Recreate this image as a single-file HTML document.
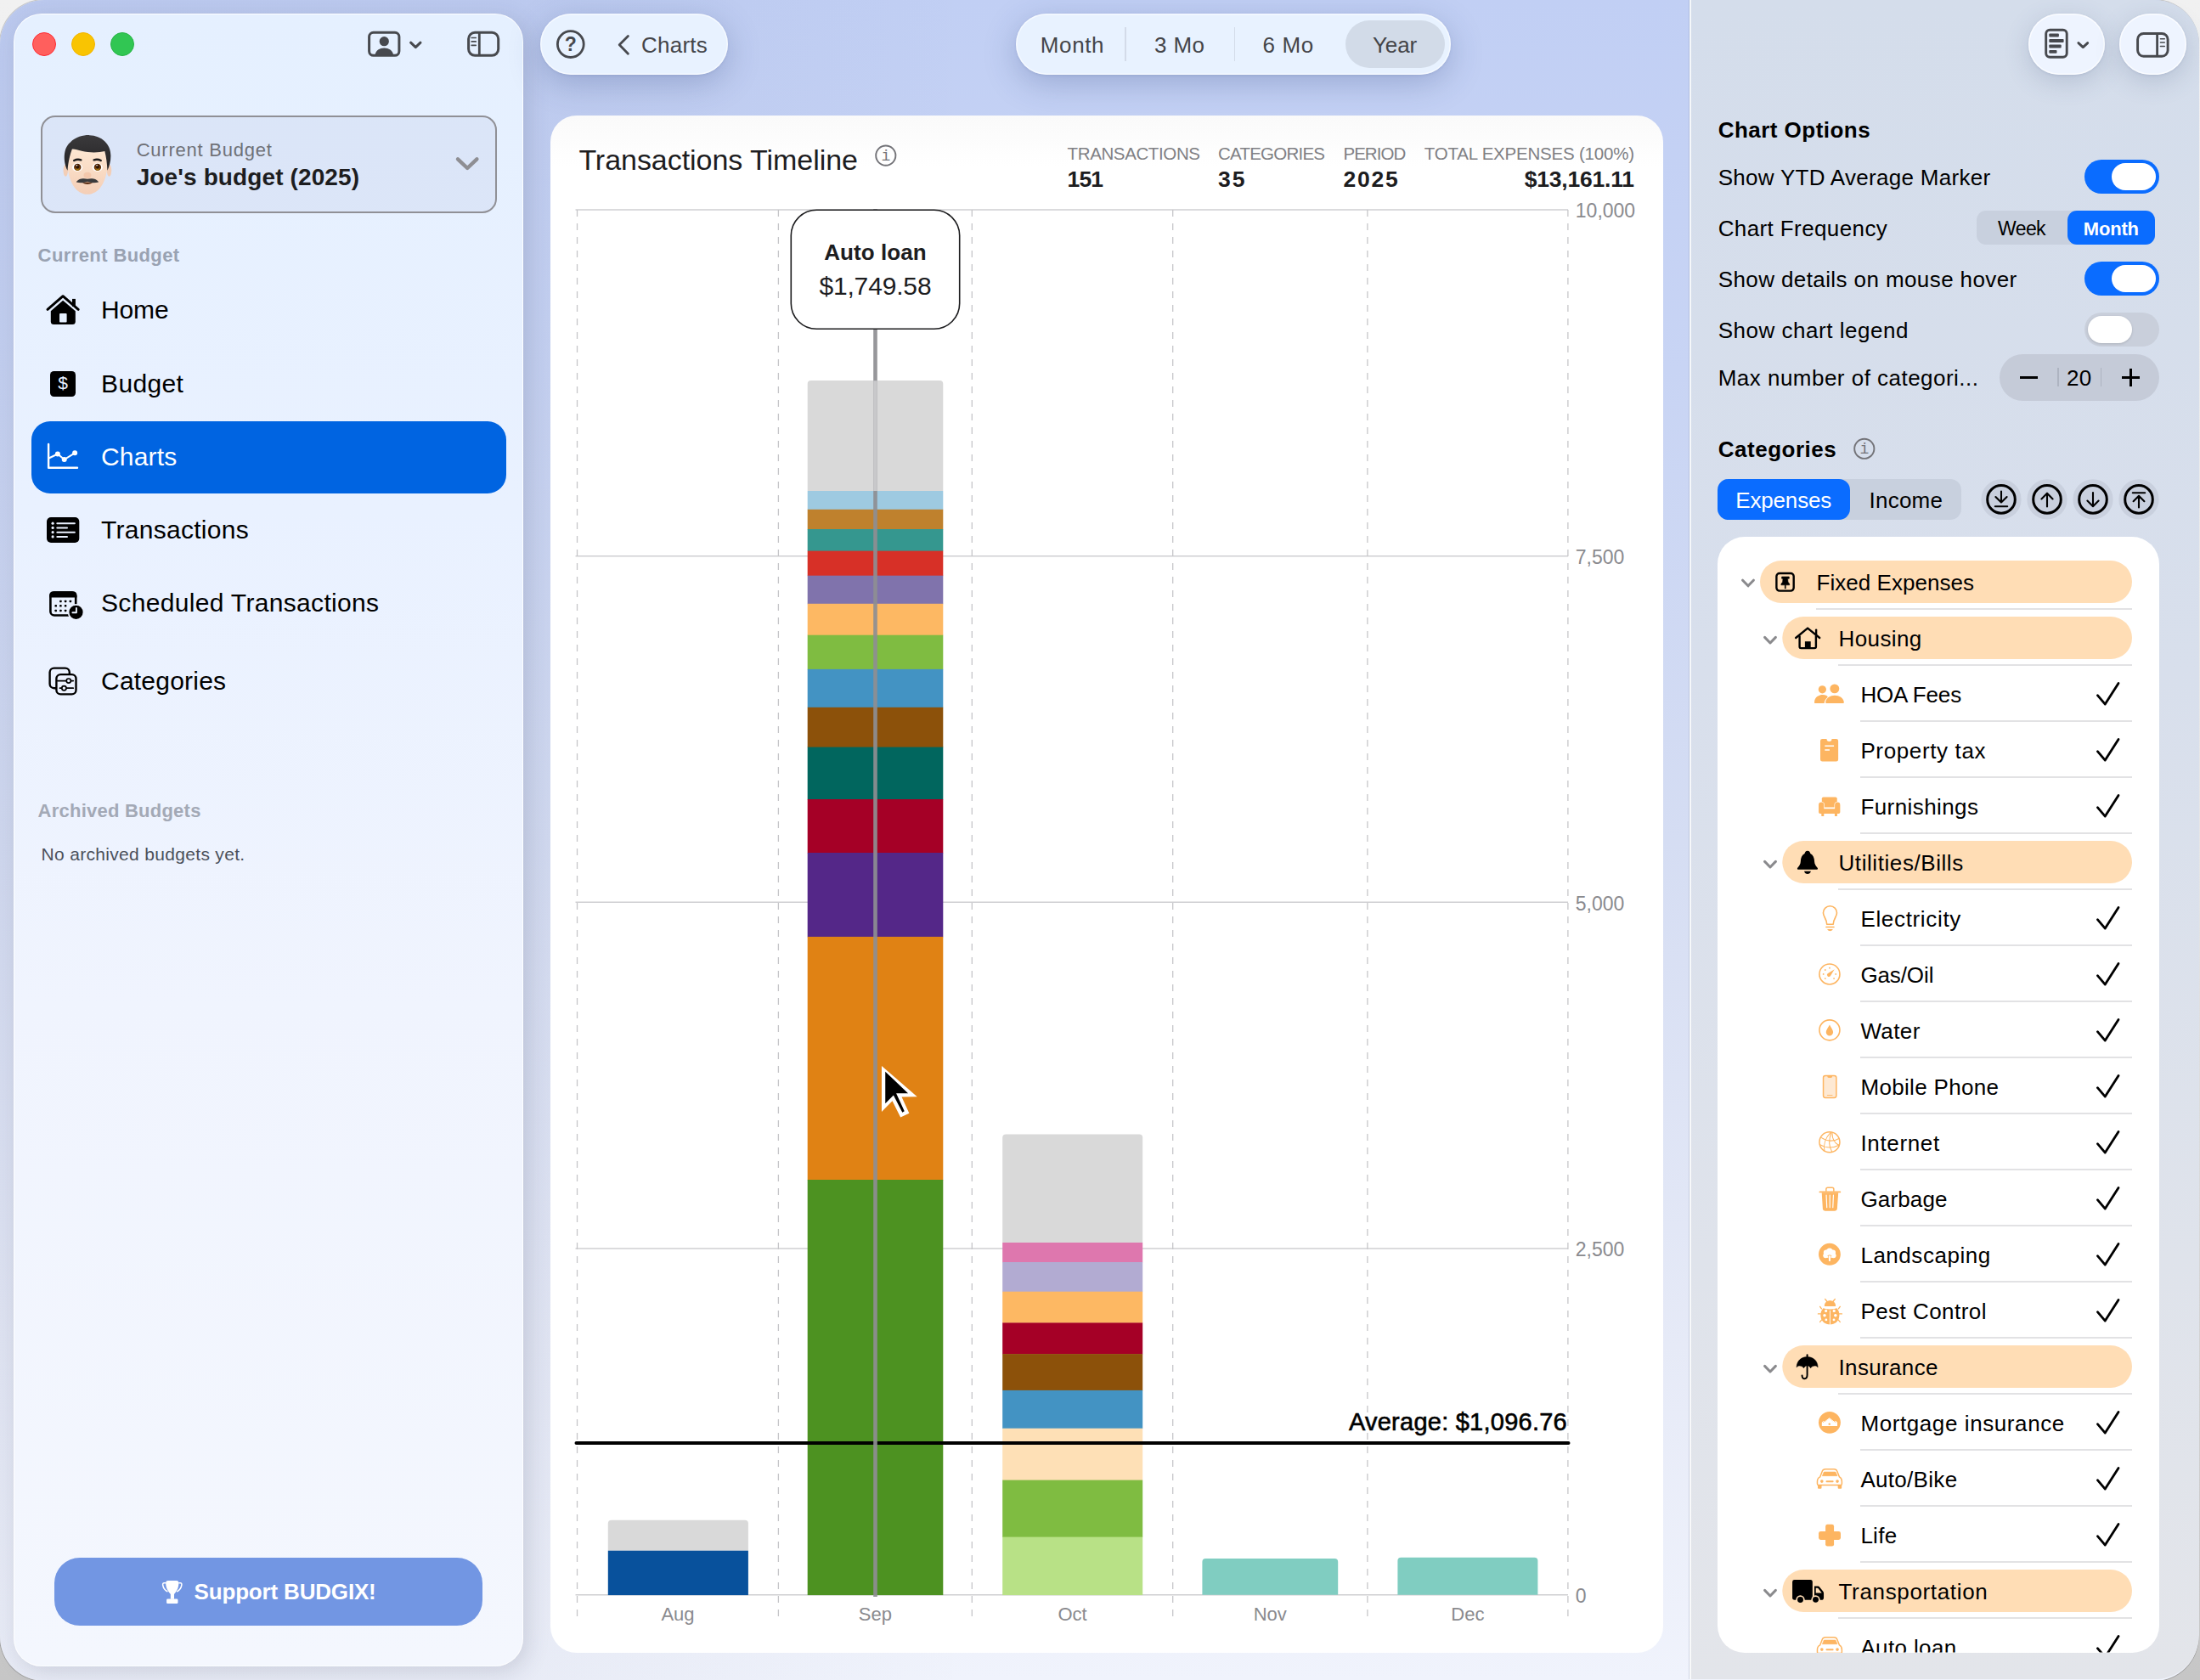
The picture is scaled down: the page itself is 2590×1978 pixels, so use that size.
<!DOCTYPE html>
<html lang="en"><head><meta charset="utf-8"><title>BUDGIX - Charts</title>
<style>
html,body{margin:0;padding:0;}
body{width:2590px;height:1978px;overflow:hidden;background:linear-gradient(180deg,#f1f1f1 0%,#e6e6e6 50%,#c6c6c6 100%);font-family:"Liberation Sans",Arial,sans-serif;position:relative;}
.b{position:absolute;box-sizing:border-box;}
.t{position:absolute;white-space:nowrap;}
svg{overflow:visible;}
</style></head><body>
<div class="b " style="left:0px;top:0px;width:2588px;height:1979px;border-radius:52px;background:linear-gradient(90deg,rgba(40,50,95,.04) 0px,rgba(40,50,95,.04) 600px,rgba(40,50,95,0) 1150px),linear-gradient(180deg,#c1cff4 0%,#c8d4f4 22%,#d5ddf3 50%,#e6eaf7 80%,#f0f3fc 100%);box-shadow:0 0 0 1px rgba(0,0,0,.18);"></div>
<div class="b " style="left:16px;top:16px;width:600px;height:1946px;border-radius:33px;background:linear-gradient(180deg,#e5f0ff 0%,#e9f1ff 30%,#f0f4fe 60%,#f4f7fe 100%);border:1.5px solid rgba(255,255,255,.85);box-shadow:5px 6px 26px rgba(60,65,95,.17);"></div>
<div class="b " style="left:38px;top:38px;width:28px;height:28px;border-radius:50%;background:#ff5f5d;border:1.5px solid #ff2b33;"></div>
<div class="b " style="left:84px;top:38px;width:28px;height:28px;border-radius:50%;background:#f9c402;border:1.5px solid #f3b400;"></div>
<div class="b " style="left:130px;top:38px;width:28px;height:28px;border-radius:50%;background:#31c653;border:1.5px solid #27b446;"></div>
<div class="b " style="left:47.5px;top:135.5px;width:537px;height:115px;border-radius:17px;background:rgba(40,60,120,.055);border:2px solid #909096;"></div>
<div class="t " style="left:160.70px;top:166.38px;font-size:22px;line-height:22px;color:#6f7177;letter-spacing:0.771px;">Current Budget</div>
<div class="t " style="left:160.70px;top:195.10px;font-size:28px;line-height:28px;color:#1d1d1f;font-weight:700;letter-spacing:0.115px;">Joe&#x27;s budget (2025)</div>
<div class="t " style="left:44.60px;top:290.38px;font-size:22px;line-height:22px;color:#99a2b2;font-weight:700;letter-spacing:0.405px;">Current Budget</div>
<div class="b " style="left:36.5px;top:495.5px;width:559.5px;height:85px;border-radius:22px;background:#0064e1;"></div>
<div class="t " style="left:119.00px;top:350.21px;font-size:30px;line-height:30px;color:#000;letter-spacing:-0.131px;">Home</div>
<div class="t " style="left:119.00px;top:436.61px;font-size:30px;line-height:30px;color:#000;letter-spacing:0.370px;">Budget</div>
<div class="t " style="left:119.00px;top:522.81px;font-size:30px;line-height:30px;color:#fff;letter-spacing:0.157px;">Charts</div>
<div class="t " style="left:119.00px;top:609.11px;font-size:30px;line-height:30px;color:#000;letter-spacing:0.282px;">Transactions</div>
<div class="t " style="left:119.00px;top:694.81px;font-size:30px;line-height:30px;color:#000;letter-spacing:0.328px;">Scheduled Transactions</div>
<div class="t " style="left:119.00px;top:787.11px;font-size:30px;line-height:30px;color:#000;letter-spacing:0.223px;">Categories</div>
<div class="t " style="left:44.60px;top:944.38px;font-size:22px;line-height:22px;color:#a3a9b6;font-weight:700;letter-spacing:0.234px;">Archived Budgets</div>
<div class="t " style="left:48.50px;top:995.22px;font-size:21px;line-height:21px;color:#4b505b;letter-spacing:0.320px;">No archived budgets yet.</div>
<div class="b " style="left:64px;top:1834px;width:504px;height:79.5px;border-radius:30px;background:#7296e3;"></div>
<div class="t " style="left:228.60px;top:1861.39px;font-size:26px;line-height:26px;color:#fff;font-weight:700;letter-spacing:-0.177px;">Support BUDGIX!</div>
<div class="b " style="left:636px;top:16px;width:221px;height:72px;border-radius:36px;background:#e8f2ff;box-shadow:0 0 0 1.5px rgba(255,255,255,.55) inset,0 10px 38px rgba(40,60,120,.26),0 1px 3px rgba(40,60,120,.10);"></div>
<div class="t " style="left:755.00px;top:39.99px;font-size:26px;line-height:26px;color:#444549;letter-spacing:0.236px;">Charts</div>
<div class="b " style="left:1195.5px;top:16px;width:512px;height:72px;border-radius:36px;background:#e8f2ff;box-shadow:0 0 0 1.5px rgba(255,255,255,.55) inset,0 10px 38px rgba(40,60,120,.26),0 1px 3px rgba(40,60,120,.10);"></div>
<div class="b " style="left:1583.5px;top:24px;width:117px;height:56px;border-radius:28px;background:#d2dbe8;"></div>
<div class="b " style="left:1324px;top:32px;width:1.5px;height:40px;background:#d3dbe9;"></div>
<div class="b " style="left:1452.5px;top:32px;width:1.5px;height:40px;background:#d3dbe9;"></div>
<div class="t " style="left:1224.80px;top:39.99px;font-size:26px;line-height:26px;color:#444549;letter-spacing:0.627px;">Month</div>
<div class="t " style="left:1359.00px;top:39.99px;font-size:26px;line-height:26px;color:#444549;letter-spacing:0.349px;">3 Mo</div>
<div class="t " style="left:1486.60px;top:39.99px;font-size:26px;line-height:26px;color:#444549;letter-spacing:0.599px;">6 Mo</div>
<div class="t " style="left:1616.00px;top:39.99px;font-size:26px;line-height:26px;color:#444549;letter-spacing:-0.135px;">Year</div>
<div class="b " style="left:648px;top:136px;width:1309.5px;height:1809.5px;border-radius:31px;background:linear-gradient(180deg,#fafafa 0,#fff 60px);"></div>
<div class="t " style="left:681.40px;top:171.22px;font-size:34px;line-height:34px;color:#1d1d1f;letter-spacing:-0.040px;">Transactions Timeline</div>
<div class="t " style="left:1256.60px;top:171.25px;font-size:20.5px;line-height:20.5px;color:#808084;letter-spacing:-0.383px;">TRANSACTIONS</div>
<div class="t " style="left:1434.00px;top:171.25px;font-size:20.5px;line-height:20.5px;color:#808084;letter-spacing:-0.769px;">CATEGORIES</div>
<div class="t " style="left:1581.40px;top:171.25px;font-size:20.5px;line-height:20.5px;color:#808084;letter-spacing:-0.932px;">PERIOD</div>
<div class="t " style="left:1676.79px;top:171.25px;font-size:20.5px;line-height:20.5px;color:#808084;letter-spacing:-0.210px;">TOTAL EXPENSES (100%)</div>
<div class="t " style="left:1256.60px;top:197.77px;font-size:26.5px;line-height:26.5px;color:#1d1d1f;font-weight:700;letter-spacing:-0.905px;">151</div>
<div class="t " style="left:1434.00px;top:197.77px;font-size:26.5px;line-height:26.5px;color:#1d1d1f;font-weight:700;letter-spacing:1.962px;">35</div>
<div class="t " style="left:1581.40px;top:197.77px;font-size:26.5px;line-height:26.5px;color:#1d1d1f;font-weight:700;letter-spacing:1.837px;">2025</div>
<div class="t " style="left:1794.78px;top:197.77px;font-size:26.5px;line-height:26.5px;color:#1d1d1f;font-weight:700;letter-spacing:-0.217px;">$13,161.11</div>
<svg class="b" style="left:0px;top:0px;" width="2590" height="1978" viewBox="0 0 2590 1978"><line x1="677.5" x2="1846.0" y1="1877.7" y2="1877.7" stroke="#cfcfd2" stroke-width="1.6"/><line x1="677.5" x2="1846.0" y1="1470.0" y2="1470.0" stroke="#cfcfd2" stroke-width="1.6"/><line x1="677.5" x2="1846.0" y1="1062.3" y2="1062.3" stroke="#cfcfd2" stroke-width="1.6"/><line x1="677.5" x2="1846.0" y1="654.7" y2="654.7" stroke="#cfcfd2" stroke-width="1.6"/><line x1="677.5" x2="1846.0" y1="247.0" y2="247.0" stroke="#cfcfd2" stroke-width="1.6"/><line x1="679.5" x2="679.5" y1="247.0" y2="1909" stroke="#c6c6c9" stroke-width="1.3" stroke-dasharray="8 8"/><line x1="916.4" x2="916.4" y1="247.0" y2="1909" stroke="#c6c6c9" stroke-width="1.3" stroke-dasharray="8 8"/><line x1="1144.3" x2="1144.3" y1="247.0" y2="1909" stroke="#c6c6c9" stroke-width="1.3" stroke-dasharray="8 8"/><line x1="1380.7" x2="1380.7" y1="247.0" y2="1909" stroke="#c6c6c9" stroke-width="1.3" stroke-dasharray="8 8"/><line x1="1609.9" x2="1609.9" y1="247.0" y2="1909" stroke="#c6c6c9" stroke-width="1.3" stroke-dasharray="8 8"/><line x1="1845.9" x2="1845.9" y1="247.0" y2="1909" stroke="#c6c6c9" stroke-width="1.3" stroke-dasharray="8 8"/><path d="M715.8 1825.7V1793.8q0 -4 4 -4H876.9q4 0 4 4V1825.7z" fill="#d9d9d9"/><rect x="715.8" y="1825.7" width="165.1" height="52.4" fill="#08519c"/><path d="M950.7 578.0V452.0q0 -4 4 -4H1106.3q4 0 4 4V578.0z" fill="#d9d9d9"/><rect x="950.7" y="578.0" width="159.6" height="22.2" fill="#9ecae1"/><rect x="950.7" y="599.8" width="159.6" height="23.6" fill="#bf812d"/><rect x="950.7" y="623.0" width="159.6" height="26.0" fill="#35978f"/><rect x="950.7" y="648.6" width="159.6" height="29.5" fill="#d73027"/><rect x="950.7" y="677.7" width="159.6" height="33.5" fill="#8073ac"/><rect x="950.7" y="710.8" width="159.6" height="37.3" fill="#fdb863"/><rect x="950.7" y="747.7" width="159.6" height="40.6" fill="#7fbc41"/><rect x="950.7" y="787.9" width="159.6" height="45.3" fill="#4393c3"/><rect x="950.7" y="832.8" width="159.6" height="47.2" fill="#8c510a"/><rect x="950.7" y="879.6" width="159.6" height="61.8" fill="#01665e"/><rect x="950.7" y="941.0" width="159.6" height="63.4" fill="#a50026"/><rect x="950.7" y="1004.0" width="159.6" height="99.3" fill="#542788"/><rect x="950.7" y="1102.9" width="159.6" height="286.5" fill="#e08214"/><rect x="950.7" y="1389.0" width="159.6" height="489.1" fill="#4d9221"/><path d="M1180.2 1463.0V1339.5q0 -4 4 -4H1341.2q4 0 4 4V1463.0z" fill="#d9d9d9"/><rect x="1180.2" y="1463.0" width="165.0" height="23.4" fill="#de77ae"/><rect x="1180.2" y="1486.0" width="165.0" height="35.1" fill="#b2abd2"/><rect x="1180.2" y="1520.7" width="165.0" height="37.1" fill="#fdb863"/><rect x="1180.2" y="1557.4" width="165.0" height="37.1" fill="#a50026"/><rect x="1180.2" y="1594.1" width="165.0" height="43.2" fill="#8c510a"/><rect x="1180.2" y="1636.9" width="165.0" height="45.2" fill="#4393c3"/><rect x="1180.2" y="1681.7" width="165.0" height="61.3" fill="#fee0b6"/><rect x="1180.2" y="1742.6" width="165.0" height="67.4" fill="#7fbc41"/><rect x="1180.2" y="1809.6" width="165.0" height="68.5" fill="#b8e186"/><path d="M1415.4 1877.7V1839q0 -4 4 -4H1571.2q4 0 4 4V1877.7z" fill="#80cdc1"/><path d="M1645.4 1877.7V1837.8q0 -4 4 -4H1806.4q4 0 4 4V1877.7z" fill="#80cdc1"/><line x1="678.5" x2="1846.5" y1="1699" y2="1699" stroke="#000" stroke-width="4" stroke-linecap="round"/><rect x="1028.2" y="246" width="4.6" height="1634" fill="#8e8e93" opacity=".92"/><rect x="1028.2" y="448.2" width="4.6" height="129.8" fill="#c8c8ca"/><rect x="931.3" y="247.3" width="198.4" height="140" rx="30" fill="#fff" stroke="#1c1c1e" stroke-width="1.6"/></svg>
<div class="t " style="left:970.24px;top:283.59px;font-size:26px;line-height:26px;color:#1d1d1f;font-weight:700;letter-spacing:0.081px;">Auto loan</div>
<div class="t " style="left:964.42px;top:321.91px;font-size:30px;line-height:30px;color:#1d1d1f;letter-spacing:-0.162px;">$1,749.58</div>
<div class="t " style="left:1587.94px;top:1659.95px;font-size:29px;line-height:29px;color:#000;letter-spacing:0.243px;-webkit-text-stroke:.6px #000;">Average: $1,096.76</div>
<div class="t " style="left:778.43px;top:1889.78px;font-size:22px;line-height:22px;color:#8a8a8e;">Aug</div>
<div class="t " style="left:1010.73px;top:1889.78px;font-size:22px;line-height:22px;color:#8a8a8e;">Sep</div>
<div class="t " style="left:1245.39px;top:1889.78px;font-size:22px;line-height:22px;color:#8a8a8e;">Oct</div>
<div class="t " style="left:1475.74px;top:1889.78px;font-size:22px;line-height:22px;color:#8a8a8e;">Nov</div>
<div class="t " style="left:1708.34px;top:1889.78px;font-size:22px;line-height:22px;color:#8a8a8e;">Dec</div>
<div class="t " style="left:1854.80px;top:237.33px;font-size:23px;line-height:23px;color:#8a8a8e;">10,000</div>
<div class="t " style="left:1854.80px;top:645.01px;font-size:23px;line-height:23px;color:#8a8a8e;">7,500</div>
<div class="t " style="left:1854.80px;top:1052.68px;font-size:23px;line-height:23px;color:#8a8a8e;">5,000</div>
<div class="t " style="left:1854.80px;top:1460.36px;font-size:23px;line-height:23px;color:#8a8a8e;">2,500</div>
<div class="t " style="left:1854.80px;top:1868.03px;font-size:23px;line-height:23px;color:#8a8a8e;">0</div>
<div class="b " style="left:1988.5px;top:0px;width:600.5px;height:1977px;border-radius:0 52px 52px 0;background:linear-gradient(180deg,#d4ddeb 0%,#d8dfec 40%,#dfe3eb 75%,#e3e5ea 100%);border-left:2px solid rgba(255,255,255,.75);box-shadow:-1px 0 0 rgba(120,130,160,.25);"></div>
<div class="b " style="left:2388px;top:16px;width:90px;height:72px;border-radius:36px;background:#eef4ff;box-shadow:0 0 0 1.5px rgba(255,255,255,.7) inset,0 8px 30px rgba(60,80,120,.20),0 1px 3px rgba(40,60,120,.10);"></div>
<div class="b " style="left:2495px;top:16px;width:79px;height:72px;border-radius:36px;background:#eef4ff;box-shadow:0 0 0 1.5px rgba(255,255,255,.7) inset,0 8px 30px rgba(60,80,120,.20),0 1px 3px rgba(40,60,120,.10);"></div>
<div class="t " style="left:2022.70px;top:140.19px;font-size:26px;line-height:26px;color:#000;font-weight:700;letter-spacing:0.466px;">Chart Options</div>
<div class="t " style="left:2022.70px;top:195.79px;font-size:26px;line-height:26px;color:#000;letter-spacing:0.287px;">Show YTD Average Marker</div>
<div class="t " style="left:2022.70px;top:255.79px;font-size:26px;line-height:26px;color:#000;letter-spacing:0.390px;">Chart Frequency</div>
<div class="t " style="left:2022.70px;top:315.79px;font-size:26px;line-height:26px;color:#000;letter-spacing:0.404px;">Show details on mouse hover</div>
<div class="t " style="left:2022.70px;top:375.79px;font-size:26px;line-height:26px;color:#000;letter-spacing:0.519px;">Show chart legend</div>
<div class="t " style="left:2022.70px;top:431.99px;font-size:26px;line-height:26px;color:#000;letter-spacing:0.480px;">Max number of categori...</div>
<div class="b " style="left:2454px;top:188px;width:88px;height:40px;border-radius:20px;background:#0a6cff;"></div>
<div class="b " style="left:2486px;top:192px;width:52px;height:32px;border-radius:16px;background:#fff;"></div>
<div class="b " style="left:2454px;top:308px;width:88px;height:40px;border-radius:20px;background:#0a6cff;"></div>
<div class="b " style="left:2486px;top:312px;width:52px;height:32px;border-radius:16px;background:#fff;"></div>
<div class="b " style="left:2454px;top:368px;width:88px;height:40px;border-radius:20px;background:#c9cfdb;"></div>
<div class="b " style="left:2457.5px;top:372px;width:52px;height:32px;border-radius:16px;background:#fff;box-shadow:0 1px 3px rgba(0,0,0,.15);"></div>
<div class="b " style="left:2327px;top:248px;width:210px;height:40px;border-radius:11px;background:#c8d0de;"></div>
<div class="b " style="left:2434px;top:248px;width:103px;height:40px;border-radius:11px;background:#0a6cff;"></div>
<div class="t " style="left:2352.00px;top:257.73px;font-size:23px;line-height:23px;color:#000;letter-spacing:-0.595px;">Week</div>
<div class="t " style="left:2452.80px;top:258.58px;font-size:22px;line-height:22px;color:#fff;font-weight:700;letter-spacing:-0.194px;">Month</div>
<div class="b " style="left:2354px;top:416.5px;width:188px;height:55px;border-radius:27.5px;background:#c5cbd8;"></div>
<div class="b " style="left:2422px;top:433px;width:1.6px;height:22px;background:#aeb4c1;"></div>
<div class="b " style="left:2472.5px;top:433px;width:1.6px;height:22px;background:#aeb4c1;"></div>
<div class="t " style="left:2433.00px;top:431.99px;font-size:26px;line-height:26px;color:#000;letter-spacing:0.189px;">20</div>
<div class="b " style="left:2378px;top:443px;width:21px;height:2.6px;background:#000;"></div>
<div class="b " style="left:2498px;top:443px;width:21px;height:2.6px;background:#000;"></div>
<div class="b " style="left:2507.2px;top:433.8px;width:2.6px;height:21px;background:#000;"></div>
<div class="t " style="left:2022.70px;top:515.99px;font-size:26px;line-height:26px;color:#000;font-weight:700;letter-spacing:0.521px;">Categories</div>
<div class="b " style="left:2022px;top:564px;width:286.5px;height:48px;border-radius:13px;background:#c8d0de;"></div>
<div class="b " style="left:2022px;top:564px;width:156px;height:48px;border-radius:13px;background:#0a6cff;"></div>
<div class="t " style="left:2043.20px;top:575.79px;font-size:26px;line-height:26px;color:#fff;letter-spacing:-0.148px;">Expenses</div>
<div class="t " style="left:2200.50px;top:575.79px;font-size:26px;line-height:26px;color:#000;letter-spacing:0.239px;">Income</div>
<div class="b " style="left:2022px;top:632px;width:520.2px;height:1313.5px;border-radius:32px;background:#fff;overflow:hidden;"></div>
<svg class="b" style="left:0px;top:0px;" width="2590" height="1978" viewBox="0 0 2590 1978"><defs><clipPath id="lc"><rect x="2022" y="632" width="520.5" height="1313.5" rx="32"/></clipPath></defs><g clip-path="url(#lc)"><rect x="2072" y="660" width="438" height="50" rx="25" fill="#ffddb5"/><rect x="2138" y="716" width="372" height="2" fill="#e2e2e4"/><rect x="2098.3" y="726" width="411.7" height="50" rx="25" fill="#ffddb5"/><rect x="2164" y="782" width="346" height="2" fill="#e2e2e4"/><rect x="2190" y="848" width="320" height="2" fill="#e2e2e4"/><path d="M2469.4 818.7L2478.3 829.1L2494 804.5" fill="none" stroke="#000" stroke-width="2.8" stroke-linecap="round" stroke-linejoin="round"/><rect x="2190" y="914" width="320" height="2" fill="#e2e2e4"/><path d="M2469.4 884.7L2478.3 895.1L2494 870.5" fill="none" stroke="#000" stroke-width="2.8" stroke-linecap="round" stroke-linejoin="round"/><rect x="2190" y="980" width="320" height="2" fill="#e2e2e4"/><path d="M2469.4 950.7L2478.3 961.1L2494 936.5" fill="none" stroke="#000" stroke-width="2.8" stroke-linecap="round" stroke-linejoin="round"/><rect x="2098.3" y="990" width="411.7" height="50" rx="25" fill="#ffddb5"/><rect x="2164" y="1046" width="346" height="2" fill="#e2e2e4"/><rect x="2190" y="1112" width="320" height="2" fill="#e2e2e4"/><path d="M2469.4 1082.7L2478.3 1093.1L2494 1068.5" fill="none" stroke="#000" stroke-width="2.8" stroke-linecap="round" stroke-linejoin="round"/><rect x="2190" y="1178" width="320" height="2" fill="#e2e2e4"/><path d="M2469.4 1148.7L2478.3 1159.1L2494 1134.5" fill="none" stroke="#000" stroke-width="2.8" stroke-linecap="round" stroke-linejoin="round"/><rect x="2190" y="1244" width="320" height="2" fill="#e2e2e4"/><path d="M2469.4 1214.7L2478.3 1225.1L2494 1200.5" fill="none" stroke="#000" stroke-width="2.8" stroke-linecap="round" stroke-linejoin="round"/><rect x="2190" y="1310" width="320" height="2" fill="#e2e2e4"/><path d="M2469.4 1280.7L2478.3 1291.1L2494 1266.5" fill="none" stroke="#000" stroke-width="2.8" stroke-linecap="round" stroke-linejoin="round"/><rect x="2190" y="1376" width="320" height="2" fill="#e2e2e4"/><path d="M2469.4 1346.7L2478.3 1357.1L2494 1332.5" fill="none" stroke="#000" stroke-width="2.8" stroke-linecap="round" stroke-linejoin="round"/><rect x="2190" y="1442" width="320" height="2" fill="#e2e2e4"/><path d="M2469.4 1412.7L2478.3 1423.1L2494 1398.5" fill="none" stroke="#000" stroke-width="2.8" stroke-linecap="round" stroke-linejoin="round"/><rect x="2190" y="1508" width="320" height="2" fill="#e2e2e4"/><path d="M2469.4 1478.7L2478.3 1489.1L2494 1464.5" fill="none" stroke="#000" stroke-width="2.8" stroke-linecap="round" stroke-linejoin="round"/><rect x="2190" y="1574" width="320" height="2" fill="#e2e2e4"/><path d="M2469.4 1544.7L2478.3 1555.1L2494 1530.5" fill="none" stroke="#000" stroke-width="2.8" stroke-linecap="round" stroke-linejoin="round"/><rect x="2098.3" y="1584" width="411.7" height="50" rx="25" fill="#ffddb5"/><rect x="2164" y="1640" width="346" height="2" fill="#e2e2e4"/><rect x="2190" y="1706" width="320" height="2" fill="#e2e2e4"/><path d="M2469.4 1676.7L2478.3 1687.1L2494 1662.5" fill="none" stroke="#000" stroke-width="2.8" stroke-linecap="round" stroke-linejoin="round"/><rect x="2190" y="1772" width="320" height="2" fill="#e2e2e4"/><path d="M2469.4 1742.7L2478.3 1753.1L2494 1728.5" fill="none" stroke="#000" stroke-width="2.8" stroke-linecap="round" stroke-linejoin="round"/><rect x="2190" y="1838" width="320" height="2" fill="#e2e2e4"/><path d="M2469.4 1808.7L2478.3 1819.1L2494 1794.5" fill="none" stroke="#000" stroke-width="2.8" stroke-linecap="round" stroke-linejoin="round"/><rect x="2098.3" y="1848" width="411.7" height="50" rx="25" fill="#ffddb5"/><rect x="2164" y="1904" width="346" height="2" fill="#e2e2e4"/><rect x="2190" y="1970" width="320" height="2" fill="#e2e2e4"/><path d="M2469.4 1940.7L2478.3 1951.1L2494 1926.5" fill="none" stroke="#000" stroke-width="2.8" stroke-linecap="round" stroke-linejoin="round"/></g></svg>
<div class="t " style="left:2138.60px;top:672.69px;font-size:26px;line-height:26px;color:#000;letter-spacing:0.029px;">Fixed Expenses</div>
<div class="t " style="left:2164.50px;top:738.69px;font-size:26px;line-height:26px;color:#000;letter-spacing:0.400px;">Housing</div>
<div class="t " style="left:2190.40px;top:804.69px;font-size:26px;line-height:26px;color:#000;letter-spacing:-0.167px;">HOA Fees</div>
<div class="t " style="left:2190.40px;top:870.69px;font-size:26px;line-height:26px;color:#000;letter-spacing:0.635px;">Property tax</div>
<div class="t " style="left:2190.40px;top:936.69px;font-size:26px;line-height:26px;color:#000;letter-spacing:0.418px;">Furnishings</div>
<div class="t " style="left:2164.50px;top:1002.69px;font-size:26px;line-height:26px;color:#000;letter-spacing:0.574px;">Utilities/Bills</div>
<div class="t " style="left:2190.40px;top:1068.69px;font-size:26px;line-height:26px;color:#000;letter-spacing:0.669px;">Electricity</div>
<div class="t " style="left:2190.40px;top:1134.69px;font-size:26px;line-height:26px;color:#000;letter-spacing:-0.112px;">Gas/Oil</div>
<div class="t " style="left:2190.40px;top:1200.69px;font-size:26px;line-height:26px;color:#000;letter-spacing:0.404px;">Water</div>
<div class="t " style="left:2190.40px;top:1266.69px;font-size:26px;line-height:26px;color:#000;letter-spacing:0.333px;">Mobile Phone</div>
<div class="t " style="left:2190.40px;top:1332.69px;font-size:26px;line-height:26px;color:#000;letter-spacing:0.666px;">Internet</div>
<div class="t " style="left:2190.40px;top:1398.69px;font-size:26px;line-height:26px;color:#000;letter-spacing:0.159px;">Garbage</div>
<div class="t " style="left:2190.40px;top:1464.69px;font-size:26px;line-height:26px;color:#000;letter-spacing:0.530px;">Landscaping</div>
<div class="t " style="left:2190.40px;top:1530.69px;font-size:26px;line-height:26px;color:#000;letter-spacing:0.461px;">Pest Control</div>
<div class="t " style="left:2164.50px;top:1596.69px;font-size:26px;line-height:26px;color:#000;letter-spacing:0.346px;">Insurance</div>
<div class="t " style="left:2190.40px;top:1662.69px;font-size:26px;line-height:26px;color:#000;letter-spacing:0.594px;">Mortgage insurance</div>
<div class="t " style="left:2190.40px;top:1728.69px;font-size:26px;line-height:26px;color:#000;letter-spacing:0.301px;">Auto/Bike</div>
<div class="t " style="left:2190.40px;top:1794.69px;font-size:26px;line-height:26px;color:#000;letter-spacing:0.270px;">Life</div>
<div class="t " style="left:2164.50px;top:1860.69px;font-size:26px;line-height:26px;color:#000;letter-spacing:0.658px;">Transportation</div>
<div class="t " style="left:2190.40px;top:1926.69px;font-size:26px;line-height:26px;color:#000;letter-spacing:0.370px;clip-path:inset(0 0 7.2px 0);">Auto loan</div>
<svg class="b" style="left:0px;top:0px;" width="2590" height="1978" viewBox="0 0 2590 1978"><rect x="434.6" y="38.3" width="35.3" height="27" rx="5" fill="none" stroke="#47494e" stroke-width="3"/><circle cx="452.3" cy="48.7" r="5.6" fill="#47494e"/><path d="M441.6 64.8C442.5 53.8 462.1 53.8 463 64.8Z" fill="#47494e"/><path d="M483.6 50.2L489.3 55.6L495 50.2" fill="none" stroke="#47494e" stroke-width="3" stroke-linecap="round" stroke-linejoin="round"/><rect x="551.6" y="38.3" width="35.1" height="27" rx="7.5" fill="none" stroke="#47494e" stroke-width="3"/><line x1="564.3" x2="564.3" y1="38.3" y2="65.3" stroke="#47494e" stroke-width="2.8"/><line x1="555.2" x2="560.2" y1="44.5" y2="44.5" stroke="#47494e" stroke-width="1.7" stroke-linecap="round"/><line x1="555.2" x2="560.2" y1="48.9" y2="48.9" stroke="#47494e" stroke-width="1.7" stroke-linecap="round"/><line x1="555.2" x2="560.2" y1="53.3" y2="53.3" stroke="#47494e" stroke-width="1.7" stroke-linecap="round"/><path d="M56 364.3L74.1 348.7L92.2 364.3" fill="none" stroke="#000" stroke-width="3" stroke-linecap="round" stroke-linejoin="round"/><rect x="85" y="351.9" width="3.9" height="9" fill="#000"/><path d="M59.8 366.3L74.1 353.8L88.8 366.3V378.4Q88.8 381.9 85.3 381.9H63.3Q59.8 381.9 59.8 378.4Z" fill="#000"/><rect x="70" y="369" width="8.6" height="10.5" rx="1" fill="#e6f0ff"/><rect x="59" y="437" width="30" height="30" rx="4.5" fill="#000"/><text x="74" y="458.4" font-family="Liberation Sans,Arial,sans-serif" font-size="21" fill="#e6efff" text-anchor="middle">$</text><path d="M57.1 523V550.7H91" fill="none" stroke="#fff" stroke-width="2.4" stroke-linecap="round" stroke-linejoin="round"/><path d="M57.5 539.5L67.9 534.5L75.7 541L88.1 533.3" fill="none" stroke="#fff" stroke-width="2"/><circle cx="67.9" cy="534.5" r="3" fill="#fff"/><circle cx="75.7" cy="541" r="3" fill="#fff"/><circle cx="88.1" cy="533.3" r="3" fill="#fff"/><rect x="55" y="609" width="38.3" height="30" rx="5" fill="#000"/><circle cx="62.1" cy="616.2" r="1.6" fill="#eaf1ff"/><line x1="67.3" x2="87.9" y1="616.2" y2="616.2" stroke="#eaf1ff" stroke-width="2" stroke-linecap="round"/><circle cx="62.1" cy="621.4" r="1.6" fill="#eaf1ff"/><line x1="67.3" x2="79" y1="621.4" y2="621.4" stroke="#eaf1ff" stroke-width="2" stroke-linecap="round"/><circle cx="62.1" cy="626.7" r="1.6" fill="#eaf1ff"/><line x1="67.3" x2="87.9" y1="626.7" y2="626.7" stroke="#eaf1ff" stroke-width="2" stroke-linecap="round"/><circle cx="62.1" cy="631.9" r="1.6" fill="#eaf1ff"/><line x1="67.3" x2="79" y1="631.9" y2="631.9" stroke="#eaf1ff" stroke-width="2" stroke-linecap="round"/><rect x="59.4" y="697.5" width="29.8" height="27" rx="4.5" fill="none" stroke="#000" stroke-width="2.6"/><path d="M58.1 703.4V701.2Q58.1 696.2 63.1 696.2H85.5Q90.5 696.2 90.5 701.2V703.4Z" fill="#000"/><rect x="70.15" y="706.65" width="2.5" height="2.5" rx=".6" fill="#000"/><rect x="75.85" y="706.65" width="2.5" height="2.5" rx=".6" fill="#000"/><rect x="81.65" y="706.65" width="2.5" height="2.5" rx=".6" fill="#000"/><rect x="64.45" y="712.05" width="2.5" height="2.5" rx=".6" fill="#000"/><rect x="70.15" y="712.05" width="2.5" height="2.5" rx=".6" fill="#000"/><rect x="75.85" y="712.05" width="2.5" height="2.5" rx=".6" fill="#000"/><rect x="64.45" y="717.65" width="2.5" height="2.5" rx=".6" fill="#000"/><rect x="70.15" y="717.65" width="2.5" height="2.5" rx=".6" fill="#000"/><rect x="75.85" y="717.65" width="2.5" height="2.5" rx=".6" fill="#000"/><circle cx="89.5" cy="720.8" r="9.8" fill="#ecf2fe"/><circle cx="89.5" cy="720.8" r="8.1" fill="#000"/><path d="M89.9 715.9V721.2H85.4" fill="none" stroke="#ecf2fe" stroke-width="1.9" stroke-linecap="round" stroke-linejoin="round"/><rect x="58.6" y="786.6" width="23.2" height="23.6" rx="5" fill="none" stroke="#000" stroke-width="2.4"/><rect x="66.4" y="794.1" width="23.1" height="23.3" rx="5" fill="#edf2fe" stroke="#000" stroke-width="2.4"/><line x1="67.8" x2="86.2" y1="801.6" y2="801.6" stroke="#000" stroke-width="1.7" stroke-linecap="round"/><line x1="70.5" x2="86.2" y1="810.2" y2="810.2" stroke="#000" stroke-width="1.7" stroke-linecap="round"/><circle cx="80.8" cy="801.6" r="2.6" fill="#edf2fe" stroke="#000" stroke-width="1.7"/><circle cx="75.4" cy="810.2" r="2.6" fill="#edf2fe" stroke="#000" stroke-width="1.7"/><path d="M539 187.3L550.2 198L561.4 187.3" fill="none" stroke="#8e8e93" stroke-width="4.4" stroke-linecap="round" stroke-linejoin="round"/><circle cx="671.8" cy="52.1" r="15.4" fill="none" stroke="#47494e" stroke-width="2.8"/><text x="671.8" y="60.3" font-family="Liberation Sans,Arial,sans-serif" font-size="23" font-weight="700" fill="#47494e" text-anchor="middle">?</text><path d="M739.4 42.6L729.2 52.8L739.4 63.2" fill="none" stroke="#47494e" stroke-width="2.8" stroke-linecap="round" stroke-linejoin="round"/><rect x="2408.7" y="35.2" width="24.5" height="32.1" rx="4.5" fill="none" stroke="#47494e" stroke-width="2.9"/><rect x="2412.3" y="39.6" width="11.6" height="3.9" rx="1" fill="#47494e"/><rect x="2412.3" y="46.1" width="17.3" height="3.9" rx="1" fill="#47494e"/><rect x="2412.3" y="52.5" width="14.4" height="3.9" rx="1" fill="#47494e"/><rect x="2412.3" y="59" width="9.2" height="3.8" rx="1" fill="#47494e"/><path d="M2446.9 50.6L2452.3 55.6L2457.7 50.6" fill="none" stroke="#47494e" stroke-width="2.9" stroke-linecap="round" stroke-linejoin="round"/><rect x="2516.6" y="39.5" width="35.5" height="26.8" rx="7" fill="none" stroke="#47494e" stroke-width="2.9"/><line x1="2539.6" x2="2539.6" y1="39.5" y2="66.3" stroke="#47494e" stroke-width="2.8"/><line x1="2543.5" x2="2548.3" y1="45.7" y2="45.7" stroke="#47494e" stroke-width="1.6" stroke-linecap="round"/><line x1="2543.5" x2="2548.3" y1="50" y2="50" stroke="#47494e" stroke-width="1.6" stroke-linecap="round"/><line x1="2543.5" x2="2548.3" y1="54.5" y2="54.5" stroke="#47494e" stroke-width="1.6" stroke-linecap="round"/><circle cx="1042.8" cy="183.1" r="11.6" fill="none" stroke="#737378" stroke-width="1.9"/><text x="1042.8" y="188.7" font-family="Liberation Mono,monospace" font-size="18" fill="#737378" text-anchor="middle">i</text><circle cx="2194.8" cy="528.3" r="11.6" fill="none" stroke="#737378" stroke-width="1.9"/><text x="2194.8" y="533.9" font-family="Liberation Mono,monospace" font-size="18" fill="#737378" text-anchor="middle">i</text><circle cx="2356" cy="587.9" r="23.6" fill="#c9d0de"/><circle cx="2356" cy="587.9" r="16.3" fill="none" stroke="#000" stroke-width="3"/><path d="M2356 578.6V591.4M2349.4 585L2356 591.6L2362.6 585M2348.8 596.2H2363.2" fill="none" stroke="#000" stroke-width="2.1" stroke-linecap="round" stroke-linejoin="round"/><circle cx="2410" cy="587.9" r="23.6" fill="#c9d0de"/><circle cx="2410" cy="587.9" r="16.3" fill="none" stroke="#000" stroke-width="3"/><path d="M2410 596.4V580.8M2403.4 587.4L2410 580.7L2416.6 587.4" fill="none" stroke="#000" stroke-width="2.1" stroke-linecap="round" stroke-linejoin="round"/><circle cx="2464" cy="587.9" r="23.6" fill="#c9d0de"/><circle cx="2464" cy="587.9" r="16.3" fill="none" stroke="#000" stroke-width="3"/><path d="M2464 580V596M2457.4 589.5L2464 596.2L2470.6 589.5" fill="none" stroke="#000" stroke-width="2.1" stroke-linecap="round" stroke-linejoin="round"/><circle cx="2518" cy="587.9" r="23.6" fill="#c9d0de"/><circle cx="2518" cy="587.9" r="16.3" fill="none" stroke="#000" stroke-width="3"/><path d="M2510.8 580.2H2525.2M2518 597.4V584M2511.6 590.2L2518 583.8L2524.4 590.2" fill="none" stroke="#000" stroke-width="2.1" stroke-linecap="round" stroke-linejoin="round"/></svg>
<svg class="b" style="left:60px;top:145px;" width="90" height="95" viewBox="0 0 1592 1680"><defs><linearGradient id="sk" x1="0" y1="0" x2="0" y2="1"><stop offset="0" stop-color="#fee9d4"/><stop offset="1" stop-color="#f4ceb6"/></linearGradient><radialGradient id="ir" cx=".5" cy=".75" r=".7"><stop offset="0" stop-color="#b98a12"/><stop offset=".55" stop-color="#6a3408"/><stop offset="1" stop-color="#4a2206"/></radialGradient><linearGradient id="hr" x1="0" y1="0" x2="0" y2="1"><stop offset="0" stop-color="#3b3a3c"/><stop offset="1" stop-color="#232224"/></linearGradient></defs><ellipse cx="305" cy="985" rx="48" ry="125" fill="#f3ceb6"/><ellipse cx="1212" cy="985" rx="48" ry="125" fill="#f3ceb6"/><path d="M335 720C335 1240 530 1482 760 1482C990 1482 1187 1240 1187 720C1187 380 335 380 335 720Z" fill="url(#sk)"/><path d="M345 985C250 800 250 520 400 400C520 280 700 245 800 250C1050 255 1250 430 1245 680C1245 800 1215 900 1175 985C1170 850 1150 700 1120 585C1000 615 800 620 640 580C560 560 480 530 440 540C400 650 360 800 345 985Z" fill="url(#hr)"/><path d="M480 778Q550 742 625 766" fill="none" stroke="#1d1c1d" stroke-width="42" stroke-linecap="round"/><path d="M895 766Q970 742 1040 778" fill="none" stroke="#1d1c1d" stroke-width="42" stroke-linecap="round"/><ellipse cx="550" cy="922" rx="108" ry="86" fill="#fff"/><circle cx="553" cy="918" r="74" fill="url(#ir)"/><circle cx="553" cy="915" r="34" fill="#2a1306"/><circle cx="538" cy="880" r="14" fill="#fff"/><ellipse cx="968" cy="922" rx="108" ry="86" fill="#fff"/><circle cx="971" cy="918" r="74" fill="url(#ir)"/><circle cx="971" cy="915" r="34" fill="#2a1306"/><circle cx="956" cy="880" r="14" fill="#fff"/><ellipse cx="760" cy="1085" rx="78" ry="62" fill="#f3c3a6" opacity=".8"/><path d="M648 1238Q760 1305 872 1238Q760 1222 648 1238Z" fill="#5c2c12"/><path d="M528 1228C555 1160 680 1135 760 1165C840 1135 965 1160 992 1228C900 1250 820 1240 760 1218C700 1240 620 1250 528 1228Z" fill="#3a3a3c"/></svg>
<svg class="b" style="left:180px;top:1850px;" width="60" height="50" viewBox="0 0 2016 1680"><path d="M510 440Q520 370 600 370H940Q1010 370 1020 440C1030 700 900 830 840 910V1100H700V910C640 830 500 700 510 440Z" fill="#fff"/><rect x="540" y="1095" width="450" height="185" rx="45" fill="#fff"/><path d="M515 462H445Q382 462 392 540C412 680 480 760 585 805" fill="none" stroke="#fff" stroke-width="52"/><path d="M1015 462H1085Q1148 462 1138 540C1118 680 1050 760 945 805" fill="none" stroke="#fff" stroke-width="52"/></svg>
<svg class="b" style="left:1020px;top:1240px;" width="80" height="90" viewBox="0 0 1493 1680"><path d="M335 280L1115 955L775 960L940 1320L750 1410L570 1050L335 1290Z" fill="#fff"/><path d="M415 405L915 880L655 880L835 1275L790 1300L595 925L415 1105Z" fill="#000"/></svg>
<svg class="b" style="left:0px;top:0px;" width="2590" height="1978" viewBox="0 0 2590 1978"><path d="M2051.6 683.2L2058 689.8L2064.4 683.2" fill="none" stroke="#8a8a8d" stroke-width="3" stroke-linecap="round" stroke-linejoin="round"/><path d="M2077.6 750.4L2084 757L2090.4 750.4" fill="none" stroke="#8a8a8d" stroke-width="3" stroke-linecap="round" stroke-linejoin="round"/><path d="M2077.6 1014.4L2084 1021L2090.4 1014.4" fill="none" stroke="#8a8a8d" stroke-width="3" stroke-linecap="round" stroke-linejoin="round"/><path d="M2077.6 1608.4L2084 1615L2090.4 1608.4" fill="none" stroke="#8a8a8d" stroke-width="3" stroke-linecap="round" stroke-linejoin="round"/><path d="M2077.6 1872.4L2084 1879L2090.4 1872.4" fill="none" stroke="#8a8a8d" stroke-width="3" stroke-linecap="round" stroke-linejoin="round"/><rect x="2091.4" y="675" width="20.3" height="20.6" rx="3.6" fill="none" stroke="#000" stroke-width="2.4"/><path d="M2097.6 679H2106.3V681.3H2104.6L2105 685.4Q2106.8 686.3 2106.8 688.8H2102.3V693H2101.3V688.8H2096.8Q2096.8 686.3 2098.6 685.4L2099 681.3H2097.6Z" fill="#000" stroke="#000" stroke-width=".6" stroke-linejoin="round"/><path d="M2114.2 751L2128.1 739.6L2142.2 751" fill="none" stroke="#000" stroke-width="2.4" stroke-linecap="round" stroke-linejoin="round"/><path d="M2138.1 741.6V748" stroke="#000" stroke-width="2.4" stroke-linecap="round"/><path d="M2118.6 748.5V761.5Q2118.6 763.1 2120.2 763.1H2136.3Q2137.9 763.1 2137.9 761.5V748.5" fill="none" stroke="#000" stroke-width="2.4"/><rect x="2124.9" y="755.2" width="6.8" height="8.4" fill="#000"/></svg>
<svg class="b" style="left:2100px;top:995px;" width="60" height="40" viewBox="0 0 2200 1467"><path d="M1025 250C940 250 920 310 900 370C780 430 730 560 725 720C720 850 640 920 590 990C570 1030 590 1055 640 1055H1410C1460 1055 1480 1030 1460 990C1410 920 1330 850 1325 720C1320 560 1270 430 1150 370C1130 310 1110 250 1025 250Z" fill="#000"/><path d="M880 1130H1170C1150 1210 1090 1245 1025 1245C960 1245 900 1210 880 1130Z" fill="#000"/></svg>
<svg class="b" style="left:2100px;top:1588px;" width="60" height="42" viewBox="0 0 2200 1540"><path d="M555 800C560 500 780 350 1012 350C1245 350 1465 500 1470 800C1420 720 1250 700 1160 830C1110 750 1060 730 1012 730C965 730 910 750 860 830C770 700 600 720 555 800Z" fill="#000" stroke="#000" stroke-width="20" stroke-linejoin="round"/><path d="M1012 265V360" stroke="#000" stroke-width="72" stroke-linecap="round"/><path d="M1012 730V1130C1012 1345 780 1345 790 1150" fill="none" stroke="#000" stroke-width="72" stroke-linecap="round"/></svg>
<svg class="b" style="left:2100px;top:1852px;" width="60" height="42" viewBox="0 0 2200 1540"><path d="M370 385Q370 295 460 295H1150Q1240 295 1240 385V1165H470Q370 1165 370 1065Z" fill="#000"/><path d="M1320 570H1470Q1520 570 1550 610L1700 800Q1725 830 1725 880V1060Q1725 1165 1620 1165H1320Z" fill="#000"/><path d="M1385 650V860H1640L1480 662Q1470 650 1450 650Z" fill="#ffddb5"/><circle cx="715" cy="1155" r="188" fill="#ffddb5"/><circle cx="1375" cy="1150" r="188" fill="#ffddb5"/><circle cx="715" cy="1155" r="127" fill="#000"/><circle cx="1375" cy="1150" r="127" fill="#000"/></svg>
<svg class="b" style="left:2125px;top:795px;" width="60" height="180" viewBox="0 0 560 1680"><circle cx="190" cy="157" r="43" fill="#fdb561"/><path d="M103 300C103 200 240 200 250 240C225 260 212 285 212 308H112Q103 308 103 300Z" fill="#fdb561"/><circle cx="325" cy="148" r="51" fill="#fdb561"/><path d="M225 298C235 195 418 195 428 298Q428 308 418 308H235Q225 308 225 298Z" fill="#fdb561"/><path d="M168 722Q168 700 190 700H238A28 28 0 0 0 294 700H343Q365 700 365 722V926Q365 948 343 948H190Q168 948 168 926Z" fill="#fdb561"/><path d="M218 777H318M218 822H270" stroke="#fff" stroke-width="14"/><rect x="185" y="1340" width="167" height="112" rx="16" fill="#fdb561"/><path d="M150 1425A29 29 0 0 1 208 1425V1468H328V1425A29 29 0 0 1 386 1425V1505Q386 1522 369 1522H167Q150 1522 150 1505Z" fill="#fdb561" stroke="#fff" stroke-width="12" paint-order="stroke"/><rect x="180" y="1515" width="28" height="34" rx="5" fill="#fdb561"/><rect x="326" y="1515" width="28" height="34" rx="5" fill="#fdb561"/></svg>
<svg class="b" style="left:2125px;top:1055px;" width="60" height="180" viewBox="0 0 560 1680"><path d="M240 310C240 250 200 230 200 185A75 75 0 0 1 350 185C350 230 310 250 310 310Z" fill="none" stroke="#fdb561" stroke-width="15" stroke-linejoin="round"/><path d="M232 340H318" stroke="#fdb561" stroke-width="14" stroke-linecap="round"/><path d="M243 364H307Q300 384 275 384Q250 384 243 364Z" fill="#fdb561"/><circle cx="270" cy="858" r="112" fill="none" stroke="#fdb561" stroke-width="15"/><circle cx="270" cy="790" r="8.5" fill="#fdb561"/><circle cx="222" cy="812" r="8.5" fill="#fdb561"/><circle cx="202" cy="858" r="8.5" fill="#fdb561"/><circle cx="222" cy="906" r="8.5" fill="#fdb561"/><circle cx="318" cy="906" r="8.5" fill="#fdb561"/><circle cx="338" cy="858" r="8.5" fill="#fdb561"/><path d="M324 804L278 880A19 19 0 0 1 248 852Z" fill="#fdb561"/><circle cx="270" cy="1473" r="112" fill="none" stroke="#fdb561" stroke-width="15"/><path d="M270 1413C250 1450 231 1475 231 1496A39 39 0 0 0 309 1496C309 1475 290 1450 270 1413Z" fill="#fdb561"/></svg>
<svg class="b" style="left:2125px;top:1255px;" width="60" height="180" viewBox="0 0 560 1680"><rect x="201" y="107" width="143" height="242" rx="22" fill="#fee9d3" stroke="#fdb561" stroke-width="14"/><path d="M245 112H300Q300 130 285 130H260Q245 130 245 112Z" fill="#fdb561"/><path d="M246 322H299" stroke="#fdb561" stroke-width="8" stroke-linecap="round"/><circle cx="270" cy="838" r="112" fill="none" stroke="#fdb561" stroke-width="14"/><g fill="none" stroke="#fdb561" stroke-width="10"><path d="M283 730C225 790 198 870 215 938"/><path d="M290 730C262 800 258 880 298 948"/><path d="M298 732C298 790 320 850 378 872"/><path d="M178 788C240 832 320 832 372 798"/><path d="M160 862C230 905 310 905 378 868"/></g><path d="M162 1385H386" stroke="#fdb561" stroke-width="16" stroke-linecap="round"/><path d="M232 1380V1356Q232 1338 250 1338H298Q316 1338 316 1356V1380" fill="none" stroke="#fdb561" stroke-width="14"/><path d="M184 1392L195 1570Q197 1593 220 1593H328Q351 1593 353 1570L366 1392Z" fill="#fdb561"/><path d="M234 1420L240 1556M273 1420V1556M312 1420L306 1556" stroke="#fff" stroke-width="11" stroke-linecap="round"/></svg>
<svg class="b" style="left:2125px;top:1450px;" width="60" height="120" viewBox="0 0 840 1680"><circle cx="405" cy="375" r="181" fill="#fdb561"/><g fill="#fff"><circle cx="405" cy="330" r="58"/><circle cx="350" cy="345" r="45"/><circle cx="460" cy="345" r="45"/><circle cx="340" cy="395" r="42"/><circle cx="470" cy="395" r="42"/><circle cx="405" cy="385" r="55"/></g><path d="M372 400Q405 380 438 400" fill="none" stroke="#fdb561" stroke-width="12"/><rect x="383" y="395" width="44" height="70" fill="#fdb561"/><rect x="391" y="398" width="28" height="90" fill="#fff"/><path d="M320 1225C320 1110 505 1110 505 1225Q505 1232 498 1232H327Q320 1232 320 1225Z" fill="#fdb561"/><path d="M362 1152L332 1114M463 1152L493 1114" stroke="#fdb561" stroke-width="20" stroke-linecap="round"/><path d="M300 1262Q412 1300 524 1262C600 1340 580 1530 412 1530C244 1530 224 1340 300 1262Z" fill="#fdb561"/><path d="M272 1272L247 1237M258 1357H216M277 1455L247 1490M552 1272L578 1237M566 1357H608M547 1455L577 1490" stroke="#fdb561" stroke-width="19" stroke-linecap="round"/><path d="M412 1300V1530" stroke="#fff" stroke-width="13"/><circle cx="345" cy="1308" r="22" fill="#fff"/><circle cx="479" cy="1308" r="22" fill="#fff"/><circle cx="322" cy="1382" r="25" fill="#fff"/><circle cx="502" cy="1382" r="25" fill="#fff"/><circle cx="348" cy="1455" r="20" fill="#fff"/><circle cx="476" cy="1455" r="20" fill="#fff"/></svg>
<svg class="b" style="left:2125px;top:1650px;" width="60" height="180" viewBox="0 0 560 1680"><circle cx="270" cy="232" r="121" fill="#fdb561"/><g fill="#fff"><path d="M205 212L238 240V270H185V232Z"/><path d="M335 212L302 240V270H355V232Z"/><path d="M268 186L318 228V270H218V228Z"/></g><path d="M196 232L268 176L340 232" fill="none" stroke="#fdb561" stroke-width="7"/><path d="M210 216L268 170L326 216" fill="none" stroke="#fff" stroke-width="9" stroke-linecap="round" stroke-linejoin="round" transform="translate(0,14)"/><circle cx="268" cy="249" r="11" fill="#fdb561"/><path d="M165 830L190 765Q198 745 225 745H318Q345 745 352 765L378 830Q405 845 405 880V905Q405 920 390 920H150Q135 920 135 905V880Q135 845 165 830Z" fill="#fff" stroke="#fdb561" stroke-width="14" stroke-linejoin="round"/><path d="M190 818L208 775H335L355 818Z" fill="#fdb561" stroke="#fdb561" stroke-width="6" stroke-linejoin="round"/><circle cx="185" cy="878" r="17" fill="#fdb561"/><circle cx="355" cy="878" r="17" fill="#fdb561"/><path d="M238 880H305" stroke="#fdb561" stroke-width="18" stroke-linecap="round"/><rect x="140" y="918" width="42" height="40" rx="9" fill="#fdb561"/><rect x="361" y="918" width="42" height="40" rx="9" fill="#fdb561"/><rect x="225" y="1352" width="93" height="240" rx="22" fill="#fdb561"/><rect x="150" y="1428" width="242" height="93" rx="22" fill="#fdb561"/></svg>
<div class="b" style="left:2125px;top:1848px;width:60px;height:97.5px;overflow:hidden;"><svg style="position:absolute;left:0;top:0" width="60" height="180" viewBox="0 0 560 1680"><path d="M165 830L190 765Q198 745 225 745H318Q345 745 352 765L378 830Q405 845 405 880V905Q405 920 390 920H150Q135 920 135 905V880Q135 845 165 830Z" fill="#fff" stroke="#fdb561" stroke-width="14" stroke-linejoin="round"/><path d="M190 818L208 775H335L355 818Z" fill="#fdb561" stroke="#fdb561" stroke-width="6" stroke-linejoin="round"/><circle cx="185" cy="878" r="17" fill="#fdb561"/><circle cx="355" cy="878" r="17" fill="#fdb561"/><path d="M238 880H305" stroke="#fdb561" stroke-width="18" stroke-linecap="round"/><rect x="140" y="918" width="42" height="40" rx="9" fill="#fdb561"/><rect x="361" y="918" width="42" height="40" rx="9" fill="#fdb561"/></svg></div>
</body></html>
